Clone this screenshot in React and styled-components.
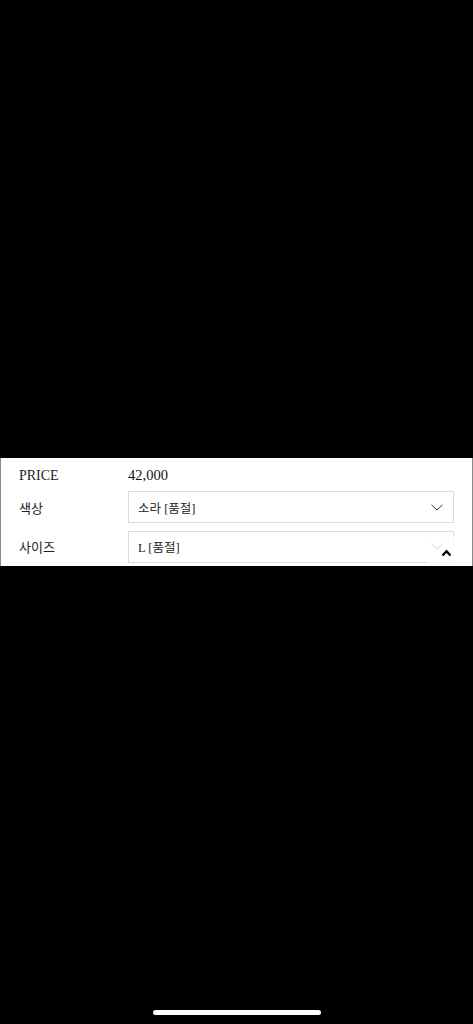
import React from "react";
import styled, { createGlobalStyle } from "styled-components";

const GlobalStyle = createGlobalStyle`
  html, body {
    margin: 0;
    padding: 0;
    background: #000000;
  }
  #root {
    min-height: 1024px;
  }
`;

const Screen = styled.div`
  width: 473px;
  min-height: 1024px;
  display: flex;
  flex-direction: column;
  background: #000000;
`;

const Panel = styled.div`
  position: relative;
  margin-top: 458px;
  height: 108px;
  box-sizing: border-box;
  background: #ffffff;
  border-left: 1px solid #8a8a8a;
  border-right: 1px solid #8a8a8a;
  padding: 9px 18px 4px 17px;
  display: grid;
  grid-template-columns: 110px 1fr;
  grid-template-rows: 17px 32px 32px;
  row-gap: 7px;
  align-items: center;
  font-family: "Liberation Serif", "Noto Sans CJK KR", serif;
  font-size: 13px;
  color: #111111;
`;

const Label = styled.div`
  font-family: ${(p) =>
    p.serif
      ? `"Liberation Serif", "Noto Serif", serif`
      : `"Noto Sans CJK KR", "Noto Sans", sans-serif`};
  font-size: ${(p) => (p.serif ? "14px" : "13px")};
  color: #222222;
  padding-left: 1px;
`;

const Value = styled.div`
  font-family: "Liberation Serif", serif;
  font-size: 14.5px;
  color: #111111;
`;

const SelectBox = styled.div`
  height: 32px;
  box-sizing: border-box;
  border: 1px solid #dcdcdc;
  display: flex;
  align-items: center;
  justify-content: space-between;
  padding: 0 10px 0 9px;
  font-family: "Liberation Serif", "Noto Sans CJK KR", serif;
  font-size: 12.5px;
  color: #222222;
  margin-top: ${(p) => (p.second ? "1px" : "0")};
`;

const Chevron = styled.svg`
  width: 12px;
  height: 7px;
  flex-shrink: 0;
`;

const TopButton = styled.button`
  position: absolute;
  right: 16px;
  bottom: 0;
  width: 30px;
  height: 30px;
  border: none;
  padding: 4px 4px 0 0;
  background: rgba(255, 255, 255, 0.8);
  display: flex;
  align-items: center;
  justify-content: flex-end;
  cursor: pointer;
`;

const Spacer = styled.div`
  flex: 1;
`;

const HomeBar = styled.div`
  align-self: center;
  width: 168px;
  height: 5px;
  border-radius: 3px;
  background: #ffffff;
  margin-bottom: 9px;
`;

function ChevronDown() {
  return (
    <Chevron viewBox="0 0 12 7">
      <path d="M0.5 0.8 L6 6 L11.5 0.8" fill="none" stroke="#333" strokeWidth="1" />
    </Chevron>
  );
}

export default function App() {
  return (
    <>
      <GlobalStyle />
      <Screen>
        <Panel>
          <Label serif>PRICE</Label>
          <Value>42,000</Value>
          <Label>색상</Label>
          <SelectBox>
            <span>소라 [품절]</span>
            <ChevronDown />
          </SelectBox>
          <Label>사이즈</Label>
          <SelectBox second>
            <span>L [품절]</span>
            <ChevronDown />
          </SelectBox>
          <TopButton aria-label="top">
            <svg width="11" height="8" viewBox="0 0 11 8">
              <path d="M1.5 6.5 L5.5 2.2 L9.5 6.5" fill="none" stroke="#000" strokeWidth="2.4" />
            </svg>
          </TopButton>
        </Panel>
        <Spacer />
        <HomeBar />
      </Screen>
    </>
  );
}
